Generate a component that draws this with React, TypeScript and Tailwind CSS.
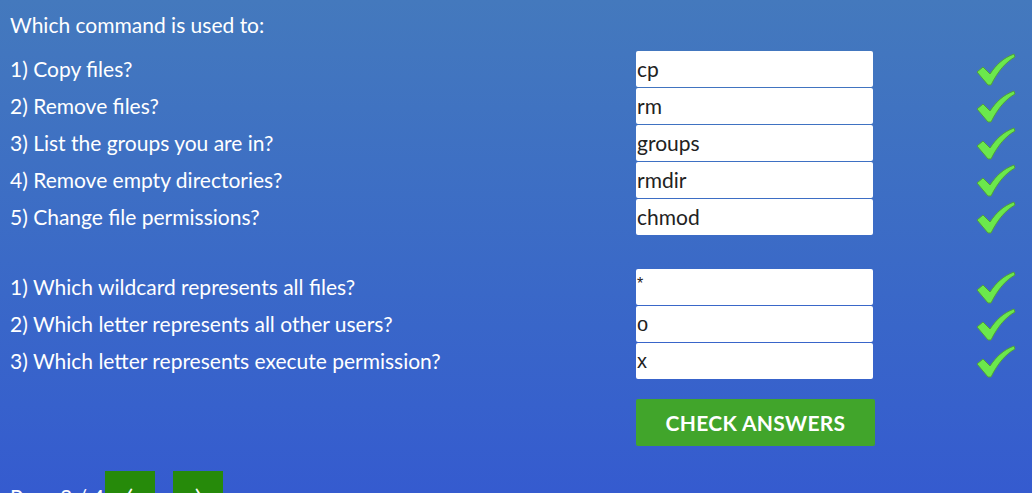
const first = [
  ['1) Copy files?', 'cp'],
  ['2) Remove files?', 'rm'],
  ['3) List the groups you are in?', 'groups'],
  ['4) Remove empty directories?', 'rmdir'],
  ['5) Change file permissions?', 'chmod'],
]

const second = [
  ['1) Which wildcard represents all files?', '*'],
  ['2) Which letter represents all other users?', 'o'],
  ['3) Which letter represents execute permission?', 'x'],
]

function Check() {
  return (
    <svg width="40" height="34" viewBox="0 0 40 34" className="ml-[103px] mt-[2px]">
      <path
        d="M1 19 L7 14 L14 21 C20 12 27 5 38 1 L39 4 C30 9 22 18 15 32 L12 32 Z"
        fill="#6be84c"
        stroke="#4f9f3c"
        strokeWidth="1"
        strokeLinejoin="round"
      />
    </svg>
  )
}

function Row({ label, value, plain }: { label: string; value: string; plain?: boolean }) {
  return (
    <div className="flex items-center h-[37px]">
      <div className="w-[626px] text-[21px] text-white">{label}</div>
      <div
        className={
          plain
            ? "w-[237px] h-[36px] bg-white rounded-[2px] flex items-center text-[20px] text-[#222] font-['Liberation_Sans',sans-serif] pl-[1px]"
            : "w-[237px] h-[36px] bg-white rounded-[2px] flex items-center text-[21px] text-[#222] pl-[1px]"
        }
      >
        <span className={value === '*' ? 'self-start mt-[3px] text-[16px]' : ''}>{value}</span>
      </div>
      <Check />
    </div>
  )
}

export default function App() {
  return (
    <div className="w-[1032px] h-[493px] overflow-hidden bg-gradient-to-b from-[#4479bd] to-[#355bcf] font-['Lato',sans-serif]">
      <div className="px-[10px] pt-[11px]">
        <h1 className="text-[21px] leading-[28px] text-white mb-[11px]">Which command is used to:</h1>
        <div className="flex flex-col">
          {first.map(([l, v]) => (
            <Row key={l} label={l} value={v} />
          ))}
        </div>
        <div className="h-[33px]" />
        <div className="flex flex-col">
          {second.map(([l, v]) => (
            <Row key={l} label={l} value={v} plain />
          ))}
        </div>
        <div className="pl-[626px] mt-[20px]">
          <button className="w-[239px] h-[47px] bg-[#41a52b] rounded-[2px] text-white font-bold text-[21px] tracking-[0.3px]">
            CHECK ANSWERS
          </button>
        </div>
        <div className="flex items-start mt-[25px] text-white text-[21px]">
          <span className="mt-[10px] w-[95px]">Page 3 / 4</span>
          <button className="w-[50px] h-[40px] bg-[#268a0a] text-white text-[28px] leading-[36px]">‹</button>
          <button className="w-[50px] h-[40px] bg-[#268a0a] text-white text-[28px] leading-[36px] ml-[18px]">›</button>
        </div>
      </div>
    </div>
  )
}
